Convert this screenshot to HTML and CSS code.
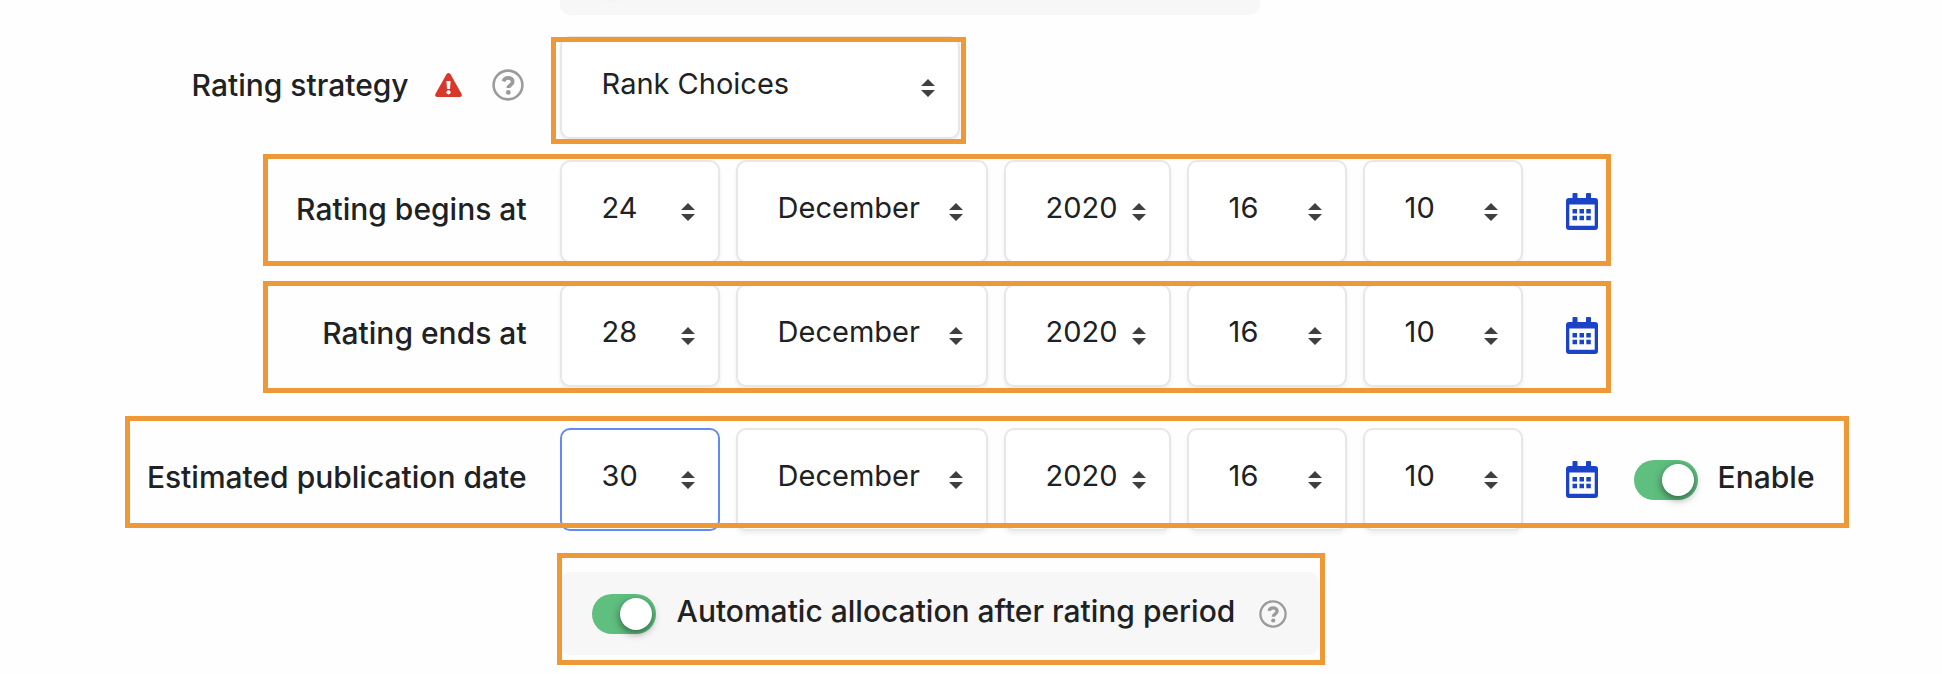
FILE: index.html
```html
<!DOCTYPE html>
<html lang="en">
<head>
    <meta charset="UTF-8">
    <meta name="viewport" content="width=device-width, initial-scale=1.0">
    <title>Rating settings</title>
    <link rel="stylesheet" href="styles.css">
</head>
<body>
    <!-- Shared icons -->
    <svg class="sprite" aria-hidden="true">
        <symbol id="icon-help" viewBox="0 0 32 32">
            <circle cx="16" cy="16" r="14.4" fill="none" stroke="currentColor" stroke-width="2.6"/>
            <path d="M11.5 12.4c.7-2.4 2.4-3.5 4.7-3.5 2.6 0 4.5 1.5 4.5 3.8 0 3.6-4.3 3.3-4.3 6.3" fill="none" stroke="currentColor" stroke-width="3.8"/>
            <circle cx="16.3" cy="23.4" r="2.400" fill="currentColor"/>
        </symbol>
        <symbol id="icon-calendar" viewBox="0 0 32 37">
            <path fill="currentColor" fill-rule="evenodd" d="M7.5 0h3q1 0 1 1v4H20V1q0-1 1-1h3q1 0 1 1v4h4q3 0 3 3v26q0 3-3 3H3q-3 0-3-3V8q0-3 3-3h3.500V1q0-1 1-1zM3.300 11.500v21.300h25.400V11.500z"/>
            <path fill="currentColor" d="M6.500 16H11v4.400H6.500zM13.500 16H18v4.400h-4.500zM20.300 16h4.500v4.400h-4.500zM6.500 22.800H11v4.400H6.500zM13.500 22.800H18v4.400h-4.500zM20.300 22.800h4.500v4.400h-4.500z"/>
        </symbol>
    </svg>

    <form class="settings">
        <div class="row">
            <div class="fields panel panel-top">
                <input type="checkbox" class="toggle" aria-label="Previous option">
            </div>
        </div>

        <div class="row">
            <div class="label">
                <label for="strategy">Rating strategy</label>
                <svg class="icon-warning" viewBox="0 0 27 24" role="img" aria-label="Required">
                    <path fill="#da372b" d="M11.500 1.200q2-2.400 4 0l11 19.600q1 2.700-1.600 3.200H2.100Q-.5 23.500.5 20.800z"/>
                    <path fill="#fff" d="M11.400 8h4.200l-.6 8h-3z"/>
                    <circle cx="13.500" cy="19.300" r="2.100" fill="#fff"/>
                </svg>
                <button type="button" class="help" aria-label="Help with Rating strategy"><svg><use href="#icon-help"/></svg></button>
            </div>
            <div class="fields frame frame-strategy">
                <select id="strategy" class="select wide"><option>Rank Choices</option></select>
            </div>
        </div>

        <div class="row">
            <label class="label" for="begin-day">Rating begins at</label>
            <div class="fields frame frame-begin">
                <select id="begin-day" class="select"><option>24</option></select>
                <select class="select month" aria-label="Month"><option>December</option></select>
                <select class="select year" aria-label="Year"><option>2020</option></select>
                <select class="select" aria-label="Hour"><option>16</option></select>
                <select class="select" aria-label="Minute"><option>10</option></select>
                <button type="button" class="calendar" aria-label="Calendar"><svg><use href="#icon-calendar"/></svg></button>
            </div>
        </div>

        <div class="row">
            <label class="label" for="end-day">Rating ends at</label>
            <div class="fields frame frame-end">
                <select id="end-day" class="select"><option>28</option></select>
                <select class="select month" aria-label="Month"><option>December</option></select>
                <select class="select year" aria-label="Year"><option>2020</option></select>
                <select class="select" aria-label="Hour"><option>16</option></select>
                <select class="select" aria-label="Minute"><option>10</option></select>
                <button type="button" class="calendar" aria-label="Calendar"><svg><use href="#icon-calendar"/></svg></button>
            </div>
        </div>

        <div class="row spaced">
            <label class="label" for="publish-day">Estimated publication date</label>
            <div class="fields frame frame-publish">
                <select id="publish-day" class="select active"><option>30</option></select>
                <select class="select month" aria-label="Month"><option>December</option></select>
                <select class="select year" aria-label="Year"><option>2020</option></select>
                <select class="select" aria-label="Hour"><option>16</option></select>
                <select class="select" aria-label="Minute"><option>10</option></select>
                <button type="button" class="calendar" aria-label="Calendar"><svg><use href="#icon-calendar"/></svg></button>
                <div class="enable">
                    <input type="checkbox" id="enable" class="toggle" checked>
                    <label class="toggle-label" for="enable">Enable</label>
                </div>
            </div>
        </div>

        <div class="row spaced">
            <div class="fields panel frame frame-auto">
                <input type="checkbox" id="auto" class="toggle" checked>
                <label class="toggle-label" for="auto">Automatic allocation after rating period</label>
                <button type="button" class="help small" aria-label="Help with Automatic allocation"><svg><use href="#icon-help"/></svg></button>
            </div>
        </div>
    </form>
</body>
</html>
```

FILE: styles.css
```css
* {
    margin: 0;
    padding: 0;
    box-sizing: border-box;
}

body {
    background-color: #fefefe;
    color: #202122;
    font-family: Inter, 'Liberation Sans', sans-serif;
    font-size: 30px;
    line-height: 40px;
}

.sprite {
    position: absolute;
    width: 0;
    height: 0;
}

.settings {
    display: flex;
    flex-direction: column;
    gap: 21px;
    padding-bottom: 16px;
    overflow: hidden;
}

.row {
    display: grid;
    grid-template-columns: 8fr 21fr;
    column-gap: 33px;
    align-items: center;
}

.row.spaced {
    margin-top: 20px;
}

.label {
    display: flex;
    justify-content: flex-end;
    align-items: center;
    padding-bottom: 6px;
    font-weight: 500;
    white-space: nowrap;
}

.fields {
    grid-column: 2;
    justify-self: start;
    display: flex;
    align-items: center;
    gap: 16px;
}

/* Dropdowns */
.select {
    appearance: none;
    flex: none;
    width: 160px;
    height: 103px;
    padding: 0 40px 8px 40px;
    border: 2px solid #e7e7e7;
    border-radius: 10px;
    background: #fff url("data:image/svg+xml,%3Csvg xmlns='http://www.w3.org/2000/svg' width='14' height='18'%3E%3Cpath fill='%23404040' d='M7 0l7 7H0zM7 18l7-7H0z'/%3E%3C/svg%3E") no-repeat right 23px center;
    box-shadow: 0 3px 4px rgba(0, 0, 0, 0.06);
    color: inherit;
    font: inherit;
    font-size: 29px;
}

.select.wide {
    width: 400px;
}

.select.month {
    width: 252px;
}

.select.year {
    width: 167px;
}

.select.active {
    border-color: #638af0;
    box-shadow: none;
}

/* Icons */
.help,
.calendar {
    flex: none;
    border: none;
    background: none;
    cursor: pointer;
}

.help svg,
.calendar svg {
    display: block;
    width: 100%;
    height: 100%;
}

.help {
    width: 32px;
    height: 32px;
    margin-left: 30px;
    margin-right: 3px;
    color: #9b9b9b;
}

.help.small {
    width: 28px;
    height: 28px;
    margin: 0 0 0 3px;
}

.calendar {
    width: 32px;
    height: 37px;
    margin-left: 27px;
    color: #1b43c8;
}

.icon-warning {
    width: 27px;
    height: 24px;
    margin-left: 26px;
}

/* Toggle switches */
.toggle {
    appearance: none;
    flex: none;
    display: flex;
    align-items: center;
    width: 64px;
    height: 40px;
    padding: 4px;
    border-radius: 20px;
    background-color: #ddd;
}

.toggle::before {
    content: "";
    width: 32px;
    height: 32px;
    border-radius: 50%;
    background-color: #fff;
    box-shadow: 0 3px 8px rgba(0, 0, 0, 0.5);
}

.toggle:checked {
    justify-content: flex-end;
    background-color: #5fbf7f;
}

.toggle-label {
    padding-bottom: 6px;
    font-weight: 500;
    white-space: nowrap;
}

.enable {
    display: flex;
    align-items: center;
    gap: 20px;
    margin-left: 20px;
}

.panel {
    gap: 21px;
    height: 83px;
    padding: 0 32px;
    border-radius: 10px;
    background-color: #f7f7f7;
}

.panel-top {
    width: 700px;
    margin-top: -68px;
}

/* Highlight frames drawn over the fields */
.frame {
    position: relative;
}

.frame::after {
    content: "";
    position: absolute;
    border: 5px solid #ef9837;
    pointer-events: none;
}

.frame-strategy::after {
    inset: 1px -6px -5px -9px;
}

.frame-begin::after {
    inset: -6px -13px -3px -297px;
}

.frame-end::after {
    inset: -3px -13px -6px -297px;
}

.frame-publish::after {
    inset: -12px -34px 3px -435px;
}

.frame-auto::after {
    inset: -19px -6px -10px -3px;
}
```
